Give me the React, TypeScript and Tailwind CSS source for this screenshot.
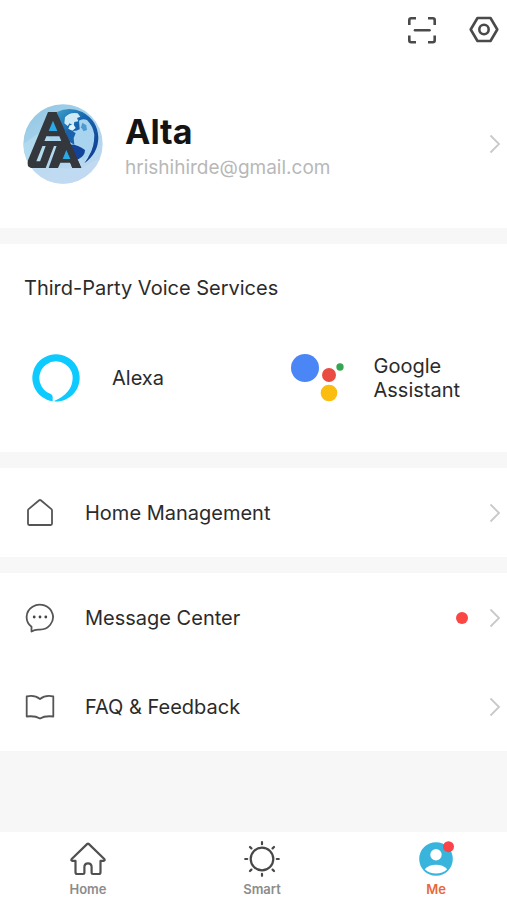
import type { ReactNode } from "react";

interface RowProps {
  icon: ReactNode;
  label: string;
  badge?: boolean;
}

interface TabProps {
  icon: ReactNode;
  label: string;
  active?: boolean;
}

function Chevron() {
  return (
    <svg viewBox="0 0 12 20" className="h-5 w-3 shrink-0" fill="none" stroke="#c9c9c9" strokeWidth="1.8">
      <path d="M1.5 1.5 10 10l-8.5 8.5" />
    </svg>
  );
}

function ScanIcon() {
  return (
    <svg viewBox="0 0 30 30" className="size-[30px]" fill="none" stroke="#4a4a4a" strokeWidth="2.6">
      <path d="M2.3 10V5.2Q2.3 3.3 4.2 3.3H9M21 3.3h4.8q1.9 0 1.9 1.9V10M27.7 20.5v4.8q0 1.9-1.9 1.9H21M9 27.2H4.2q-1.9 0-1.9-1.9V20.5" />
      <path d="M8 15.3h14.5" strokeLinecap="round" />
    </svg>
  );
}

function SettingsIcon() {
  return (
    <svg viewBox="0 0 30 30" className="size-[30px]" fill="none" stroke="#4a4a4a" strokeWidth="2.6" strokeLinejoin="round">
      <path d="M8.5 3h13l6.8 11.5L21.5 26h-13L1.7 14.500z" />
      <circle cx="15" cy="14.5" r="4.7" />
    </svg>
  );
}

function Avatar() {
  return (
    <svg viewBox="38 42 240 240" className="size-20 shrink-0" role="img" aria-label="Alta logo">
      <defs>
        <linearGradient id="sky" x1="0" y1="0" x2="0.6" y2="1">
          <stop offset="0" stopColor="#8fc4e2" />
          <stop offset="0.5" stopColor="#a9d4ec" />
          <stop offset="1" stopColor="#bcd8f0" />
        </linearGradient>
        <linearGradient id="ocean" x1="0" y1="0" x2="0.7" y2="1">
          <stop offset="0" stopColor="#3a9fca" />
          <stop offset="0.4" stopColor="#1867ae" />
          <stop offset="1" stopColor="#123f96" />
        </linearGradient>
        <clipPath id="disc">
          <circle cx="158" cy="162" r="119" />
        </clipPath>
      </defs>
      <g clipPath="url(#disc)">
        <rect x="38" y="42" width="240" height="240" fill="url(#sky)" />
        <path d="M38 162 100 120 150 190 38 235zM150 42 230 50 278 120 278 42z" fill="#b9dff0" opacity="0.6" />
        <path d="M60 232 210 236 278 200V282H60z" fill="#c3dbf2" opacity="0.7" />
        <path d="M140 66Q176 48 216 66 262 92 264 142 264 190 222 220 246 188 250 146L196 122 158 124z" fill="url(#ocean)" />
        <path d="M164 82q14-16 38-12l8 10-10 4 4 10-12 2-2 12-12-8-6 8-10-8z" fill="#cfeaf7" />
        <path d="M178 106l12-2 6 10-10 8-12-6z" fill="#e2f3fb" />
        <path d="M206 92q10-8 24-2 18 18 22 44 0 38-16 62l-18 16-10-16 8-20-18-14-18-2-6-20 14-14 20-8z" fill="#a9d4ef" />
        <path d="M216 98l12 8 2 14-10 4-8-12z" fill="#4d9bd2" />
        <path d="M164 122h22l10 8-6 14 2 20-18-10z" fill="#1a62ad" />
        <path d="M170 164q30-4 54 16 0 18-20 28h-12z" fill="#12429a" />
      </g>
      <g fill="#34373c">
        <path d="M113 66H139L213 234H186L147 139H108L78 214H98L90 234H62Q48 231 53 211z" />
        <path d="M99 153H178V168H131L106 234H82L106 168H93z" />
        <path d="M141 162H181L213 234H186L180 218H150L143 234H115z" />
      </g>
      <path d="M128 92 141 123H115zM168 180 180 207H157z" fill="#29a9e6" />
    </svg>
  );
}

function AlexaLogo() {
  return (
    <svg viewBox="0 0 144 144" className="size-12 shrink-0" fill="#0dcaff">
      <path d="M62 142A71 71 0 1 1 82 142Q72 144 66 141 122 117 122 71A50 50 0 1 0 55 119Q62 122 62 128z" />
    </svg>
  );
}

function AssistantLogo() {
  return (
    <svg viewBox="0 0 159 144" className="h-12 w-[53px] shrink-0">
      <circle cx="42" cy="42" r="42" fill="#4a86f5" />
      <circle cx="114" cy="63" r="21" fill="#e94c41" />
      <circle cx="147" cy="39" r="11" fill="#37a653" />
      <circle cx="114" cy="117" r="25" fill="#fbbd10" />
    </svg>
  );
}

function HouseIcon() {
  return (
    <svg viewBox="0 0 30 30" className="size-[30px]" fill="none" stroke="#555" strokeWidth="1.8" strokeLinejoin="round">
      <path d="M3 12.5q0-.8.6-1.4L14.2 2.3q.8-.6 1.6 0l10.600 8.800q.6.600.6 1.400v13.300q0 1.200-1.200 1.200H4.200Q3 27 3 25.800z" />
    </svg>
  );
}

function MessageIcon() {
  return (
    <svg viewBox="0 0 30 30" className="size-[30px]" fill="none" stroke="#555" strokeWidth="1.8" strokeLinejoin="round">
      <path d="M6.5 28.500V23.800A13.200 12.500 0 1 1 14.500 26.600Q10 26.200 6.500 28.500z" />
      <g fill="#444" stroke="none">
        <circle cx="9.2" cy="14" r="1.4" />
        <circle cx="15" cy="14" r="1.4" />
        <circle cx="20.8" cy="14" r="1.4" />
      </g>
    </svg>
  );
}

function BookIcon() {
  return (
    <svg viewBox="0 0 30 30" className="size-[30px]" fill="none" stroke="#555" strokeWidth="1.8" strokeLinejoin="round">
      <path d="M1.7 4.5Q9.5 2.7 15 7q5.500-4.300 13.300-2.500V24.500Q20 23.500 15 26.500 10 23.500 1.700 24.500z" />
    </svg>
  );
}

function HomeTabIcon() {
  return (
    <svg viewBox="0 0 36 36" className="size-9" fill="none" stroke="#505050" strokeWidth="2.2" strokeLinejoin="round">
      <path d="M17.3 2.9 1.7 18q-1 1.8.8 1.900H5.500V31.200q0 1.800 1.800 1.800h5.700q1.400 0 1.400-1.400V26q0-3.700 3.600-3.700T21.600 26v5.600q0 1.400 1.400 1.400h5.700q1.800 0 1.800-1.800V19.900h3q1.800-.1.800-1.900L18.700 2.900q-.7-.7-1.400 0z" />
    </svg>
  );
}

function SunIcon() {
  return (
    <svg viewBox="0 0 36 36" className="size-9" fill="none" stroke="#484848" strokeWidth="2.2">
      <circle cx="18" cy="18" r="11.3" />
      <path
        d="M18 1.2v2M18 32.8v2M1.2 18h2M32.8 18h2M6 6l1.4 1.4M28.6 28.6 30 30M30 6l-1.4 1.4M7.4 28.6 6 30"
        strokeLinecap="round"
      />
    </svg>
  );
}

function PersonIcon() {
  return (
    <svg viewBox="0 0 36 36" className="size-9">
      <circle cx="18" cy="18" r="16.8" fill="#39b4dc" />
      <circle cx="18" cy="13.8" r="5.7" fill="#fff" />
      <path d="M6.8 28.2Q11 23.8 18 23.8t11.2 4.4Q24.5 32.6 18 32.6T6.8 28.2z" fill="#fff" />
      <circle cx="30.5" cy="5.7" r="5.5" fill="#fb4448" />
    </svg>
  );
}

function Row({ icon, label, badge }: RowProps) {
  return (
    <a href="#" className="flex min-h-[89px] items-center bg-white pl-[25px] pr-[6px]">
      {icon}
      <span className="ml-[30px] flex-1 text-xl leading-6">{label}</span>
      {badge && <span className="mr-[21px] size-3 rounded-full bg-[#fb4744]" />}
      <Chevron />
    </a>
  );
}

function Tab({ icon, label, active }: TabProps) {
  return (
    <a href="#" className="flex w-20 flex-col items-center gap-1">
      {icon}
      <span
        className={
          active
            ? "text-[13px] font-semibold leading-4 text-[#e8683a]"
            : "text-[13px] font-semibold leading-4 text-[#8c8c8c]"
        }
      >
        {label}
      </span>
    </a>
  );
}

export default function App() {
  return (
    <div className="flex min-h-screen flex-col bg-[#f7f7f7] font-[Inter,sans-serif] text-[#2b2b2b]">
      <main className="flex flex-1 flex-col gap-4">
        <header className="bg-white pb-11">
          <div className="flex justify-end gap-8 pr-2 pt-[15px]">
            <button type="button" aria-label="Scan">
              <ScanIcon />
            </button>
            <button type="button" aria-label="Settings">
              <SettingsIcon />
            </button>
          </div>
          <a href="#" className="mt-[59px] flex items-center pl-[23px] pr-[6px]">
            <Avatar />
            <div className="ml-[22px] flex-1 pt-2">
              <h1 className="text-[34px] font-bold leading-10 text-[#141414]">Alta</h1>
              <p className="text-[19px] leading-8 text-[#b8b8b8]">hrishihirde@gmail.com</p>
            </div>
            <Chevron />
          </a>
        </header>

        <section className="bg-white pb-[50px] pl-6 pt-8">
          <h2 className="text-xl leading-6">Third-Party Voice Services</h2>
          <div className="mt-[54px] grid grid-cols-2 items-center">
            <a href="#" className="flex items-center gap-8 pl-2">
              <AlexaLogo />
              <span className="text-xl leading-6">Alexa</span>
            </a>
            <a href="#" className="flex items-center gap-[30px] pl-[25px]">
              <AssistantLogo />
              <span className="text-xl leading-6">
                Google
                <br />
                Assistant
              </span>
            </a>
          </div>
        </section>

        <Row icon={<HouseIcon />} label="Home Management" />

        <nav aria-label="Support">
          <Row icon={<MessageIcon />} label="Message Center" badge />
          <Row icon={<BookIcon />} label="FAQ & Feedback" />
        </nav>
      </main>

      <nav aria-label="Main" className="flex justify-between bg-white pb-[3px] pl-12 pr-[31px] pt-[9px]">
        <Tab icon={<HomeTabIcon />} label="Home" />
        <Tab icon={<SunIcon />} label="Smart" />
        <Tab icon={<PersonIcon />} label="Me" active />
      </nav>
    </div>
  );
}
